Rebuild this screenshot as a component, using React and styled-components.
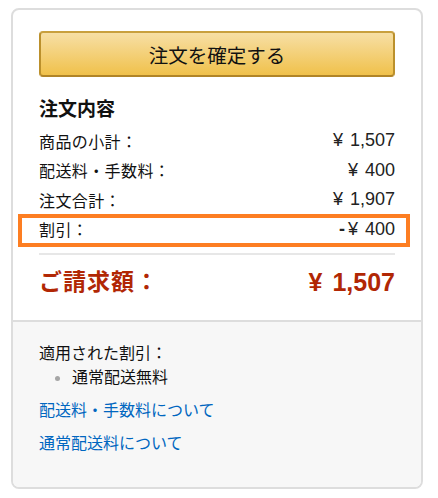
import styled, { createGlobalStyle } from "styled-components";

const GlobalStyle = createGlobalStyle`
  body {
    margin: 0;
    background: #fff;
    font-family: "Liberation Sans", "Noto Sans CJK JP", sans-serif;
    color: #111;
  }
`;

const Page = styled.div`
  padding: 8px 15px 8px 11px;
`;

const Card = styled.div`
  width: 412px;
  box-sizing: border-box;
  border: 2px solid #dddddd;
  border-radius: 8px;
  overflow: hidden;
  background: #fff;
`;

const Top = styled.div`
  padding: 21px 26px 21px 26px;
`;

const PlaceButton = styled.button`
  display: block;
  width: 100%;
  height: 46px;
  box-sizing: border-box;
  margin: 0 0 19px;
  border: 2px solid;
  border-color: #c9a03e #bb902c #b08427;
  border-radius: 4px;
  background: linear-gradient(to bottom, #f7dfa5, #f0c14b);
  font-family: inherit;
  font-size: 19.5px;
  color: #111;
  cursor: pointer;
`;

const Heading = styled.h3`
  margin: 0 0 2px;
  font-size: 19px;
  font-weight: 700;
  line-height: 28px;
  color: #111;
`;

const Row = styled.div`
  position: relative;
  display: flex;
  justify-content: space-between;
  align-items: center;
  height: 29.5px;
  font-size: 16px;
  letter-spacing: 0.4px;

  ${(p) =>
    p.$highlight &&
    `
    &::after {
      content: "";
      position: absolute;
      top: -1px;
      bottom: -3px;
      left: -21px;
      right: -15px;
      border: 4px solid #fd7e22;
      pointer-events: none;
    }
  `}
`;

const Amount = styled.span`
  font-size: 18px;
  letter-spacing: 0;
  color: #222;
`;

const Yen = styled.span`
  margin-right: ${(p) => p.$gap || 7}px;
`;

const Minus = styled.span`
  margin-right: 3px;
  font-weight: 700;
`;

const Divider = styled.hr`
  margin: 9px 0 0;
  border: none;
  height: 2px;
  background: #e7e7e7;
`;

const TotalRow = styled.div`
  display: flex;
  justify-content: space-between;
  align-items: center;
  margin-top: 10px;
  line-height: 34px;
  font-weight: 700;
  color: #b12704;
`;

const TotalLabel = styled.span`
  font-size: 23px;
  letter-spacing: 1px;
`;

const TotalAmount = styled.span`
  font-size: 25px;
`;

const Bottom = styled.div`
  border-top: 2px solid #dddddd;
  background: #f7f7f7;
  padding: 20px 26px 31px;
  font-size: 16px;
  line-height: 24px;
`;

const BulletItem = styled.div`
  display: flex;
  align-items: center;
  gap: 12px;
  padding-left: 16px;
`;

const Dot = styled.span`
  width: 5px;
  height: 5px;
  border-radius: 50%;
  background: #a6a6a6;
`;

const Link = styled.a`
  display: block;
  margin-top: 9px;
  color: #0066c0;
  text-decoration: none;
  cursor: pointer;
`;

const rows = [
  { label: "商品の小計：", amount: "1,507" },
  { label: "配送料・手数料：", amount: "400" },
  { label: "注文合計：", amount: "1,907" },
  { label: "割引：", amount: "400", minus: true, highlight: true },
];

const App = () => {
  return (
    <>
      <GlobalStyle />
      <Page>
        <Card>
          <Top>
            <PlaceButton>注文を確定する</PlaceButton>
            <Heading>注文内容</Heading>
            {rows.map((r) => (
              <Row key={r.label} $highlight={r.highlight}>
                <span>{r.label}</span>
                <Amount>
                  {r.minus && <Minus>-</Minus>}
                  <Yen>¥</Yen>
                  {r.amount}
                </Amount>
              </Row>
            ))}
            <Divider />
            <TotalRow>
              <TotalLabel>ご請求額：</TotalLabel>
              <TotalAmount>
                <Yen $gap={10}>¥</Yen>1,507
              </TotalAmount>
            </TotalRow>
          </Top>
          <Bottom>
            <div>適用された割引：</div>
            <BulletItem>
              <Dot />
              <span>通常配送無料</span>
            </BulletItem>
            <Link>配送料・手数料について</Link>
            <Link>通常配送料について</Link>
          </Bottom>
        </Card>
      </Page>
    </>
  );
};

export default App;
